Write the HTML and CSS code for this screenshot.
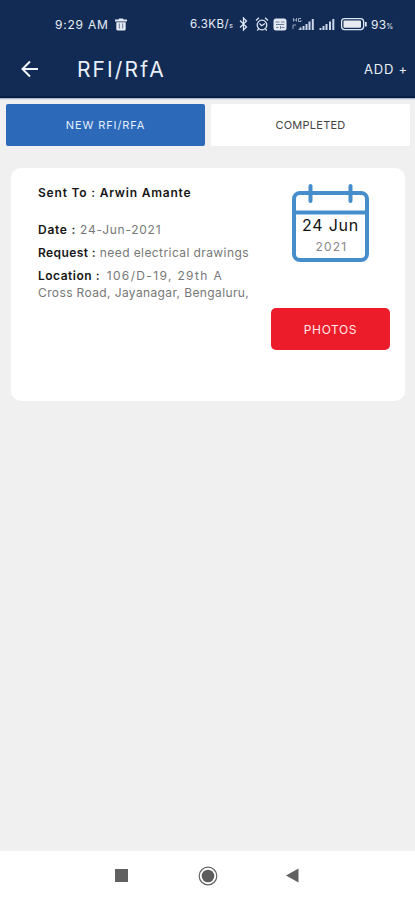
FILE: index.html
```html
<!DOCTYPE html>
<html lang="en">
<head>
<meta charset="utf-8">
<title>RFI/RfA</title>
<link rel="stylesheet" href="styles.css">
</head>
<body>
<header class="header">
  <div class="status">
    <span class="time">9:29 AM</span>
    <svg class="trash" width="12" height="13" viewBox="0 0 12 13"><path d="M0 1.500h3.500L4 .4h4l.5 1.100H12v2H0zM1.300 4.200h9.400V11q0 1.600-1.600 1.600H2.900Q1.300 12.600 1.300 11z" fill="#e4eaf4"/><path d="M4.300 5.500v5M7.700 5.500v5" stroke="#67799a"/></svg>
    <span class="speed">6.3KB/<small>s</small></span>
    <svg class="icons" width="129" height="16" viewBox="239 16 129 16" fill="none" stroke="#dce5f3" stroke-width="1.300">
      <path d="M240 20.500l6.500 6.500-3 3V18l3 3-6.500 6.500"/>
      <circle cx="262" cy="25" r="4.800"/><path d="M256 20.500l3-2.700M268 20.500l-3-2.700M259.500 23.500l2.200 2.200 3.300-2.200M258.500 29l-1.200 1.500M265.500 29l1.200 1.500"/>
      <rect x="273.500" y="18.500" width="13" height="12" rx="2.500" fill="#e4eaf4" stroke="none"/>
      <path d="M275.500 22h4M281 22h3.500M276 24.500h8M276 27.500h2.500M281.500 27.500h3M280.500 26v3" stroke="#6c7c9b" stroke-width="1"/>
      <path d="M293.500 18v3.500M293.500 20h3M296.500 18v3.500M301 18.500h-2.500v3h2.500v-1.500M293 29v-4h3M299 29v1" stroke-width=".9" stroke="#a7b5cd"/>
      <path d="M300.500 30v-2.500M303.500 30v-4M306.500 30v-6M309.500 30v-8.500M312.800 30V19M320.500 30v-2M323.500 30v-4M326.500 30v-6M330 30v-8.500M333.300 30V19" stroke="#cbd7e8" stroke-width="2"/>
      <rect x="341.600" y="18.600" width="22" height="11" rx="3"/>
      <rect x="343.500" y="20.500" width="17.500" height="7.300" rx="1" fill="#e6ebf2" stroke="none"/>
      <path d="M365.800 22v4.500" stroke-width="1.800"/>
    </svg>
    <span class="percent">93<small>%</small></span>
  </div>
  <div class="appbar">
    <svg class="back" width="18" height="18" viewBox="0 0 18 18"><path d="M17 9H2M9 1.500L1.500 9 9 16.500" fill="none" stroke="#f2f6fb" stroke-width="2"/></svg>
    <h1 class="title">RFI/RfA</h1>
    <span class="add">ADD +</span>
  </div>
</header>
<main class="content">
  <nav class="tabs">
    <div class="tab active"><span>NEW RFI/RFA</span></div>
    <div class="tab"><span>COMPLETED</span></div>
  </nav>
  <article class="card">
    <div class="details">
      <p class="sent">Sent To : Arwin Amante</p>
      <p class="date"><b>Date :</b> 24-Jun-2021</p>
      <p class="request"><b>Request :</b> need electrical drawings</p>
      <p class="location"><b>Location :</b> 106/D-19, 29th A<br><span class="street">Cross Road, Jayanagar, Bengaluru,</span></p>
    </div>
    <div class="side">
      <div class="calendar">
        <svg class="frame" width="78" height="79" viewBox="0 0 78 79" fill="none" stroke="#468dcb" stroke-width="4"><rect x="2" y="9" width="73" height="67" rx="6"/><path d="M2 28.500h73"/><path d="M18.500 2v15M58.500 2v15" stroke-linecap="round"/></svg>
        <span class="day">24 Jun</span>
        <span class="year">2021</span>
      </div>
      <div class="photos"><span>PHOTOS</span></div>
    </div>
  </article>
</main>
<footer class="navbar">
  <svg width="13" height="13"><rect width="13" height="13" fill="#606060"/></svg>
  <svg width="20" height="20"><circle cx="10" cy="10" r="8.800" fill="none" stroke="#626262" stroke-width="1.200"/><circle cx="10" cy="10" r="6.300" fill="#5c5c5c"/></svg>
  <svg width="13" height="15"><path d="M0 7.500L12.500.5v14z" fill="#606060"/></svg>
</footer>
</body>
</html>
```
FILE: styles.css
```css
* { box-sizing: border-box; }
body {
  margin: 0;
  height: 900px;
  display: flex;
  flex-direction: column;
  background: #f0f0f0;
  font-family: Inter, "Liberation Sans", sans-serif;
  color: #111;
  overflow: hidden;
}
h1, p { margin: 0; white-space: nowrap; }
.header {
  height: 98px;
  background: #122b54;
  border-bottom: 2px solid #081f48;
  box-shadow: 0 1px 1px #a9b3c5;
  color: #e9eff8;
}
.status {
  height: 48px;
  display: flex;
  align-items: center;
  padding-left: 55px;
  font-size: 12px;
  white-space: nowrap;
}
.time { width: 60px; letter-spacing: .8px; }
.speed { width: 49px; margin-left: 63px; font-size: 11.500px; letter-spacing: .5px; }
.speed small, .percent small { font-size: 7px; }
.percent { margin-left: 3px; letter-spacing: .2px; }
.appbar {
  height: 42px;
  display: flex;
  align-items: center;
  padding: 0 7px 0 21px;
}
.title { margin-left: 38px; font-size: 21px; font-weight: 400; letter-spacing: 2.100px; }
.add { margin-left: auto; font-size: 13px; letter-spacing: .8px; }
.content { flex: 1; padding: 6px 5px 0 6px; }
.tabs { display: flex; gap: 6px; }
.tab {
  flex: 1;
  height: 42px;
  display: flex;
  align-items: center;
  justify-content: center;
  background: #fff;
  border-radius: 2px;
  font-size: 11px;
  letter-spacing: .25px;
  color: #444;
}
.tab.active { background: #2d69b9; color: #e4effc; letter-spacing: .9px; }
.card {
  height: 233px;
  margin: 22px 5px 0 5px;
  display: flex;
  justify-content: space-between;
  background: #fff;
  border-radius: 10px;
}
.details { padding: 16px 0 0 27px; font-size: 12px; line-height: 18px; color: #777; }
.details b, .sent { font-weight: 600; color: #161616; }
.sent { letter-spacing: .8px; }
.date { margin-top: 19px; letter-spacing: .73px; }
.request { margin-top: 5px; letter-spacing: .41px; }
.location { margin-top: 5px; line-height: 17px; letter-spacing: 1.350px; }
.location b { margin-right: 2px; letter-spacing: .5px; }
.location .street { letter-spacing: .38px; }
.side { width: 134px; padding: 16px 15px 0 0; display: flex; flex-direction: column; align-items: center; }
.calendar {
  position: relative;
  width: 78px;
  height: 79px;
  display: flex;
  flex-direction: column;
  align-items: center;
  padding-top: 31px;
  white-space: nowrap;
}
.frame { position: absolute; inset: 0; }
.day { font-size: 16px; line-height: 20px; letter-spacing: .8px; }
.year { margin: 3px 0 0 2px; font-size: 12px; line-height: 18px; letter-spacing: 1.200px; color: #888; }
.photos {
  width: 119px;
  height: 42px;
  margin-top: 45px;
  display: flex;
  align-items: center;
  justify-content: center;
  border-radius: 5px;
  background: #ed1c2a;
  color: #ffe9e9;
  font-size: 12px;
  letter-spacing: .6px;
}
.navbar {
  height: 49px;
  display: flex;
  align-items: center;
  background: #fff;
  padding-left: 115px;
}
.navbar svg + svg { margin-left: 70px; }
.navbar svg:last-child { margin-left: 68px; }
```
